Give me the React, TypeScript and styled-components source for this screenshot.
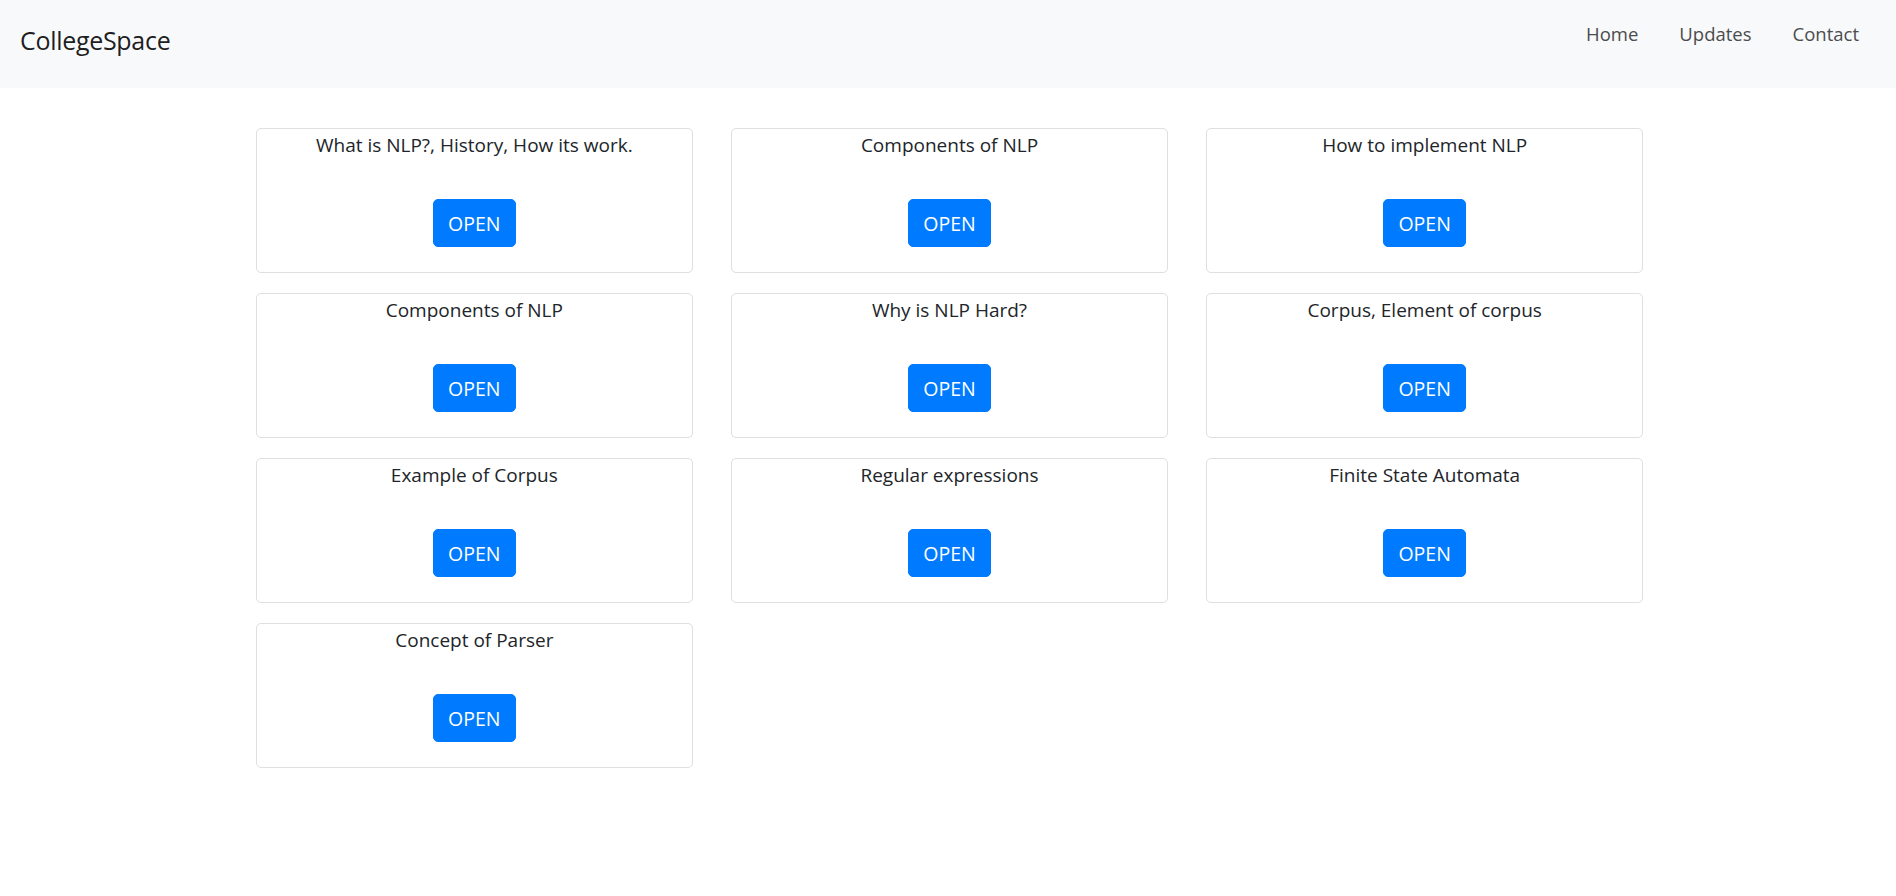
import React from "react";
import styled, { createGlobalStyle } from "styled-components";

const Global = createGlobalStyle`
  html, body { margin: 0; padding: 0; background: #fff; }
  body { font-family: "Open Sans", "Noto Sans", sans-serif; color: #212529; }
  * { box-sizing: border-box; }
`;

const NavBar = styled.nav`
  height: 88px;
  background: #f8f9fa;
  display: flex;
  justify-content: space-between;
  align-items: flex-start;
  padding: 0 37px 0 20px;
`;

const Brand = styled.a`
  font-size: 25px;
  font-weight: 500;
  line-height: 30px;
  margin-top: 25px;
  color: rgba(0, 0, 0, 0.9);
  text-decoration: none;
  letter-spacing: -0.3px;
`;

const NavLinks = styled.ul`
  display: flex;
  gap: 41px;
  list-style: none;
  margin: 19px 0 0;
  padding: 0;
`;

const NavLink = styled.a`
  font-size: 18.5px;
  line-height: 30px;
  color: #4b4c4d;
  text-decoration: none;
`;

const Main = styled.main`
  padding: 40px 253px 0 256px;
`;

const Grid = styled.div`
  display: grid;
  grid-template-columns: repeat(3, 1fr);
  column-gap: 38.5px;
  row-gap: 20px;
`;

const Card = styled.div`
  height: 145px;
  border: 1px solid #dfdfdf;
  border-radius: 5px;
  display: flex;
  flex-direction: column;
  align-items: center;
`;

const Title = styled.div`
  font-size: 19px;
  line-height: 31px;
  padding-top: 1px;
  color: #212529;
  text-align: center;
`;

const OpenButton = styled.button`
  margin-top: 38px;
  height: 48px;
  padding: 1px 14px 0;
  min-width: 83px;
  border: 1px solid #007bff;
  border-radius: 5px;
  background: #007bff;
  color: #fff;
  font-family: inherit;
  font-size: 19.5px;
  line-height: 30px;
  cursor: pointer;
`;

const topics = [
  "What is NLP?, History, How its work.",
  "Components of NLP",
  "How to implement NLP",
  "Components of NLP",
  "Why is NLP Hard?",
  "Corpus, Element of corpus",
  "Example of Corpus",
  "Regular expressions",
  "Finite State Automata",
  "Concept of Parser",
];

export default function App() {
  return (
    <>
      <Global />
      <NavBar>
        <Brand href="#">CollegeSpace</Brand>
        <NavLinks>
          <li><NavLink href="#">Home</NavLink></li>
          <li><NavLink href="#">Updates</NavLink></li>
          <li><NavLink href="#">Contact</NavLink></li>
        </NavLinks>
      </NavBar>
      <Main>
        <Grid>
          {topics.map((t, i) => (
            <Card key={i}>
              <Title>{t}</Title>
              <OpenButton>OPEN</OpenButton>
            </Card>
          ))}
        </Grid>
      </Main>
    </>
  );
}
